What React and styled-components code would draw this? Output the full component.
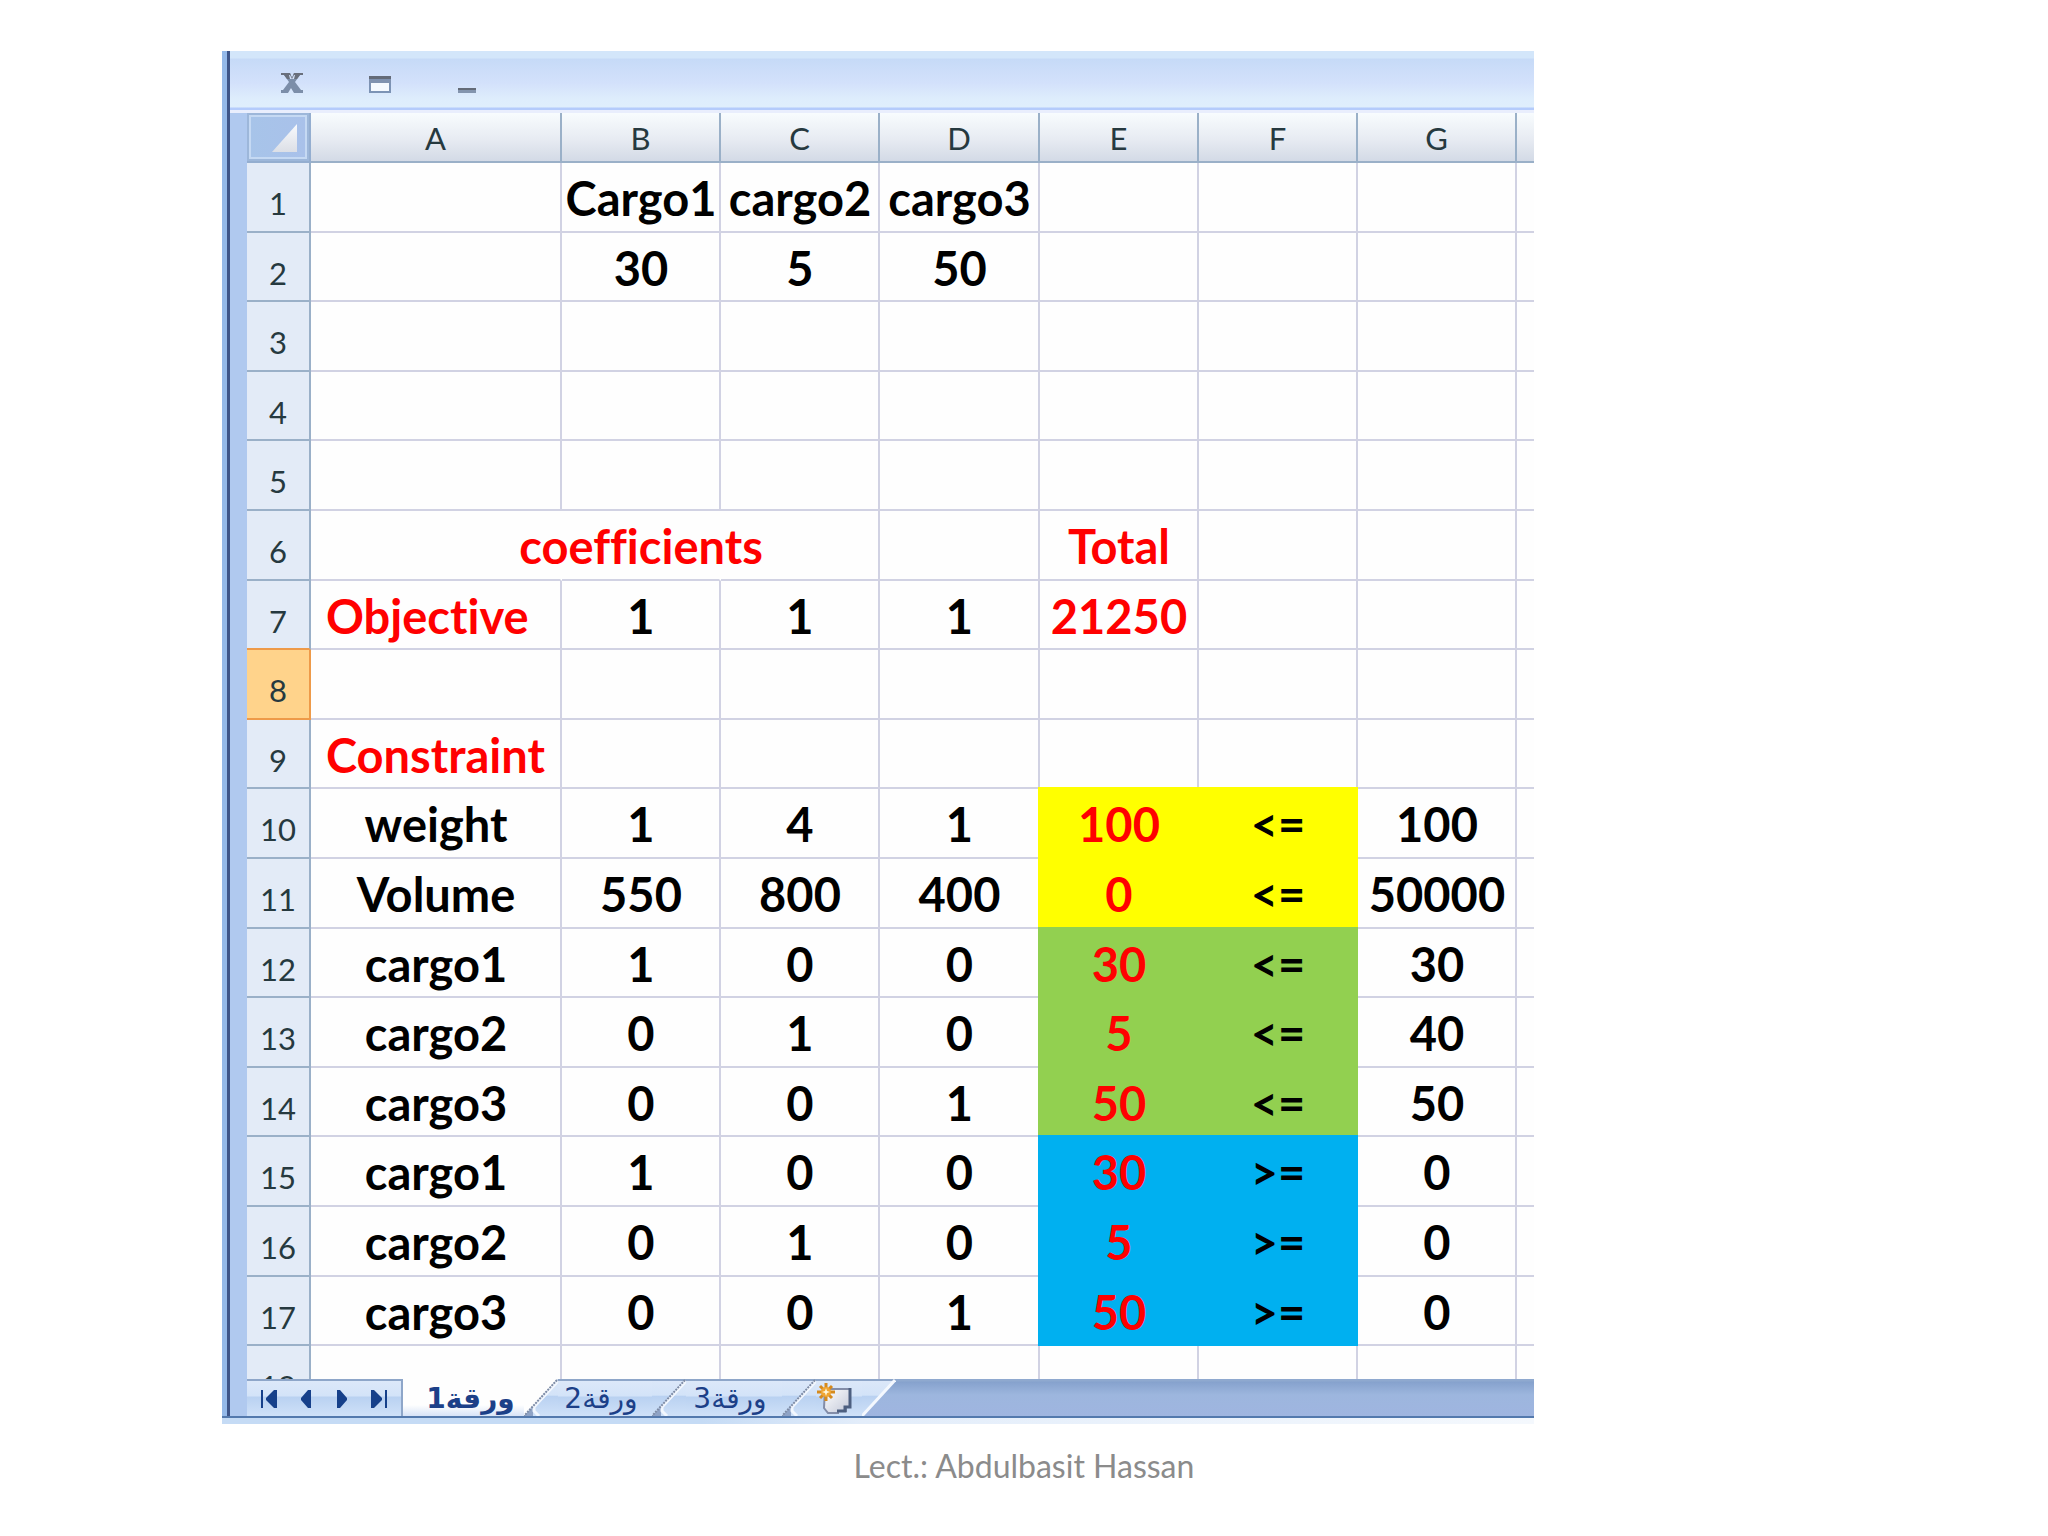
import React from "react";
import styled, { createGlobalStyle, css } from "styled-components";

const GRID = "#d1d2e3";
const HEAD_LINE = "#9ab0c8";
const ORANGE = "#ee9a49";
const YELLOW = "#ffff00";
const GREEN = "#92d050";
const BLUE = "#00b0f0";

const GlobalStyle = createGlobalStyle`
  * { box-sizing: border-box; }
  body { margin: 0; background: #ffffff; font-family: Lato, "Noto Sans", sans-serif; font-variant-ligatures: none; }
  button { font: inherit; border: 0; padding: 0; background: none; cursor: pointer; }
  svg { display: block; }
`;

const Slide = styled.main`
  height: 100vh;
  display: flex;
  flex-direction: column;
  padding: 51px 514px 0 222px;
`;

const Frame = styled.section`
  flex: 1;
  min-height: 0;
  display: flex;
  flex-direction: column;
`;

const FrameBody = styled.div`
  flex: 1;
  min-height: 0;
  display: flex;
  flex-direction: column;
  border-left: 5px solid #94b9e9;
`;

const Inner = styled.div`
  flex: 1;
  min-height: 0;
  display: flex;
  flex-direction: column;
  border-left: 3px solid #3d5488;
`;

const TitleBar = styled.header`
  height: 62px;
  flex: none;
  display: flex;
  align-items: flex-start;
  gap: 64px;
  padding: 20px 0 0 50px;
  border-bottom: 3px solid #e9eefd;
  background: linear-gradient(#d3e6fa 0 7px, #c6daf7 8px, #d3e1fb 32px, #deedfc 48px, #dfeefc 56px, #b4cbfb 57px);
`;

const WindowButton = styled.button`
  width: 24px;
  height: 24px;
`;

const Workspace = styled.div`
  flex: 1;
  min-height: 0;
  display: flex;
  flex-direction: column;
  border-left: 17px solid #b0c9ef;
`;

const Pane = styled.div`
  flex: 1;
  min-height: 0;
  overflow: hidden;
`;

const Table = styled.table`
  width: 100%;
  table-layout: fixed;
  border-collapse: separate;
  border-spacing: 0;
`;

const Col = styled.col`
  width: ${(p) => (p.$w ? p.$w + "px" : "auto")};
`;

const headText = css`
  font-size: 31px;
  line-height: 40px;
  font-weight: 400;
  color: #26393f;
`;

const ColumnHead = styled.th`
  ${headText}
  height: 50px;
  padding: 2px 0 0;
  border-right: 2px solid ${HEAD_LINE};
  border-bottom: 2px solid ${HEAD_LINE};
  background: linear-gradient(#f8fcfe, #e7ebf2 55%, #d3dae6);
  &:last-child { border-right: 0; }
`;

const Corner = styled.td`
  height: 50px;
  padding: 0;
  border-right: 2px solid #94aed0;
  border-bottom: 2px solid #94aed0;
`;

const CornerButton = styled.button`
  display: flex;
  width: 100%;
  height: 48px;
  align-items: flex-end;
  justify-content: flex-end;
  padding: 0 10px 7px 0;
  border: 2px solid #9db7da;
  box-shadow: inset 0 0 0 2px #c5d9f3;
  background: linear-gradient(90deg, #a7c4e9, #a9c1ea);
`;

const Row = styled.tr`
  height: 70px;
  &:nth-child(5n + 2), &:nth-child(5n + 4) { height: 69px; }
`;

const RowHead = styled.th`
  ${headText}
  padding: 12px 0 0;
  border-right: 2px solid ${(p) => (p.$active ? ORANGE : HEAD_LINE)};
  border-bottom: 2px solid ${(p) => (p.$active || p.$beforeActive ? ORANGE : HEAD_LINE)};
  background: ${(p) => (p.$active ? "#ffd38b" : "#e3ebf7")};
`;

const Cell = styled.td`
  padding: 2px 14px 0 15px;
  font-size: 47px;
  line-height: 54px;
  font-weight: 700;
  color: ${(p) => (p.$red ? "#ff0000" : "#000000")};
  background: #fefefe;
  border-right: 2px solid ${(p) => (p.$open ? "#fefefe" : GRID)};
  border-bottom: 2px solid ${GRID};
  ${(p) => p.$fill && css`
    background: ${p.$fill};
    border-color: ${p.$fill};
    box-shadow: -2px 0 ${p.$fill}, 0 -2px ${p.$fill}, -2px -2px ${p.$fill};
  `}
  &:last-child { border-right: 0; }
`;

const CellText = styled.div`
  display: flex;
  justify-content: ${(p) => (p.$left ? "flex-start" : "center")};
  white-space: nowrap;
`;

const SheetBar = styled.footer`
  height: 37px;
  flex: none;
  display: flex;
  overflow: hidden;
  background: linear-gradient(#8fa9cf 0 2px, #86a2cd 3px, #9db6de 16px, #9fb5e0);
`;

const barFill = css`
  border-top: 2px solid #8ea6c9;
  background: linear-gradient(#dce8f9, #d3e3f8 15px, #b9d1f1 16px, #cfe1f8);
`;

const Navigator = styled.nav`
  ${barFill}
  width: 156px;
  display: flex;
  align-items: center;
  justify-content: space-between;
  padding: 0 14px;
  border-right: 2px solid #8ea6c9;
`;

const NavButton = styled.button`
  width: 18px;
  height: 18px;
`;

const Tabs = styled.div`
  display: flex;
`;

const Tab = styled.button`
  ${barFill}
  width: ${(p) => p.$w}px;
  display: flex;
  align-items: center;
  justify-content: center;
  padding-right: 8px;
  white-space: nowrap;
  font-family: "DejaVu Sans", sans-serif;
  font-size: 28px;
  line-height: 32px;
  font-weight: 400;
  color: #1c4088;
  ${(p) => p.$active && css`
    padding: 0 0 0 14px;
    font-weight: 700;
    border-top-color: #fefefe;
    background: linear-gradient(#fefefe 24px, #d7e3f7);
  `}
`;

const BottomEdge = styled.div`
  height: 8px;
  flex: none;
  border-top: 2px solid #5379ad;
  background: linear-gradient(90deg, #c5dbf5 0 480px, #e3edfa 640px, #f4f8fd);
`;

const Credit = styled.p`
  margin: 0 -514px 0 -222px;
  height: 112px;
  padding-top: 22px;
  text-align: center;
  font-size: 32px;
  line-height: 40px;
  color: #8b8b8b;
`;

const CloseGlyph = () => (
  <svg width="24" height="24" viewBox="0 0 24 24">
    <path d="M1 2h9l2 5 2-5h9v2h-3l-5 7 6 8h2v3h-9l-3-5-3 5H1v-3h2l6-8-5-7H1z" fill="#7c8ea9" />
    <path d="M1 2h9l2 5 2-5h9v2h-3l-3 4h-10l-3-4H1z" fill="#696f7c" />
    <path d="M9 4h1l2 4 2-4h1l-1 4h-4z" fill="#d0def6" />
  </svg>
);

const RestoreGlyph = () => (
  <svg width="24" height="24" viewBox="0 0 24 24">
    <rect x="2" y="6" width="20" height="15" fill="#f4f9ff" stroke="#7c93b5" strokeWidth="2" />
    <path d="M1 5h22v3H1z" fill="#646b78" />
    <path d="M1 8h22v4H1z" fill="#7f92b0" />
  </svg>
);

const MinimiseGlyph = () => (
  <svg width="24" height="24" viewBox="0 0 24 24">
    <path d="M2 17h18v2H2z" fill="#646b78" />
    <path d="M2 19h18v3H2z" fill="#8394ae" />
  </svg>
);

const CornerGlyph = () => (
  <svg width="25" height="28" viewBox="0 0 25 28">
    <defs>
      <linearGradient id="corner" x1="0" y1="0" x2="0" y2="1">
        <stop offset="0" stopColor="#f8fafd" />
        <stop offset="1" stopColor="#dcdfe6" />
      </linearGradient>
    </defs>
    <path d="M25 0V28H0z" fill="url(#corner)" />
  </svg>
);

const navShapes = {
  "First sheet": "M0 0h2v18H0zM16 0v18h-3L5 10V8l8-8z",
  "Previous sheet": "M14 0v18h-3L4 10V8l7-8z",
  "Next sheet": "M4 0v18h3l7-8V8L7 0z",
  "Last sheet": "M16 0h2v18h-2zM2 0v18h3l8-8V8L5 0z",
};

const Slope = ({ from, to }) => {
  const id = `slope-${from}-${to}`;
  return (
    <svg width="34" height="37" viewBox="0 0 34 37" aria-hidden="true">
      <defs>
        <linearGradient id={id} x1="0" y1="0" x2="0" y2="1">
          <stop offset="0" stopColor="#dce8f9" />
          <stop offset="0.44" stopColor="#d3e3f8" />
          <stop offset="0.46" stopColor="#b9d1f1" />
          <stop offset="1" stopColor="#cfe1f8" />
        </linearGradient>
      </defs>
      <path d="M0 0H34L0 37z" fill={from === "active" ? "#fefefe" : `url(#${id})`} />
      {to === "tab" && <path d="M34 0V37H0z" fill={`url(#${id})`} />}
      {to === "tab" && <path d="M0 37L9 28V37z" fill="#8fa3c6" />}
      {from !== "active" && <path d="M0 0H34V2H0z" fill="#8ea6c9" />}
      {to === "tab" && <path d="M34 2L10 28V32L15 37" fill="none" stroke="#f2f7fe" strokeWidth="3" />}
      <path
        d="M33 1L0 37"
        fill="none"
        stroke={to === "tab" ? "#7e8ca6" : "#f4f8fe"}
        strokeWidth={to === "tab" ? 2 : 3}
        strokeDasharray={to === "tab" ? "2 1" : "none"}
      />
    </svg>
  );
};

const InsertGlyph = () => (
  <svg width="36" height="32" viewBox="0 0 36 32">
    <defs>
      <linearGradient id="paper" x1="0" y1="0" x2="1" y2="1">
        <stop offset="0" stopColor="#ffffff" />
        <stop offset="1" stopColor="#c2c7d8" />
      </linearGradient>
    </defs>
    <path d="M8 6H33V24H29V28H21V30H11L7 25z" fill="url(#paper)" stroke="#838da8" strokeWidth="2" />
    <path d="M33 5V24H28V28H20" fill="none" stroke="#4d5f80" strokeWidth="3" />
    <g stroke="#d58a1d" strokeWidth="3">
      <path d="M9 0V18M0 9H18M3 3L15 15M15 3L3 15" />
    </g>
    <circle cx="9" cy="9" r="5" fill="#f0a532" />
    <path d="M9 5L10 8L13 9L10 10L9 13L8 10L5 9L8 8z" fill="#fff8dc" />
  </svg>
);

const columns = ["A", "B", "C", "D", "E", "F", "G", ""];
const widths = [64, 251, 159, 159, 160, 159, 159, 159, 0];

const rows = [
  { cells: ["", "Cargo1", "cargo2", "cargo3"] },
  { cells: ["", "30", "5", "50"] },
  { cells: [] },
  { cells: [] },
  { cells: [] },
  { cells: ["", "coefficients", "", "", "Total"], red: [1, 4], open: [0, 1] },
  { cells: ["Objective", "1", "1", "1", "21250"], red: [0, 4], left: true },
  { cells: [], active: true },
  { cells: ["Constraint"], red: [0], left: true },
  { cells: ["weight", "1", "4", "1", "100", "<=", "100"], red: [4], fill: YELLOW },
  { cells: ["Volume", "550", "800", "400", "0", "<=", "50000"], red: [4], fill: YELLOW },
  { cells: ["cargo1", "1", "0", "0", "30", "<=", "30"], red: [4], fill: GREEN },
  { cells: ["cargo2", "0", "1", "0", "5", "<=", "40"], red: [4], fill: GREEN },
  { cells: ["cargo3", "0", "0", "1", "50", "<=", "50"], red: [4], fill: GREEN },
  { cells: ["cargo1", "1", "0", "0", "30", ">=", "0"], red: [4], fill: BLUE },
  { cells: ["cargo2", "0", "1", "0", "5", ">=", "0"], red: [4], fill: BLUE },
  { cells: ["cargo3", "0", "0", "1", "50", ">=", "0"], red: [4], fill: BLUE },
  { cells: [] },
];

const isFilled = (c) => c === 4 || c === 5;
const has = (list, c) => Boolean(list && list.includes(c));

function SheetRow({ row, next, number }) {
  return (
    <Row>
      <RowHead scope="row" $active={row.active} $beforeActive={next && next.active}>
        {number}
      </RowHead>
      {columns.map((_, c) => (
        <Cell
          key={c}
          $red={has(row.red, c)}
          $open={has(row.open, c)}
          $fill={isFilled(c) ? row.fill : undefined}
        >
          <CellText $left={row.left && c === 0}>{row.cells[c]}</CellText>
        </Cell>
      ))}
    </Row>
  );
}

export default function App() {
  return (
    <>
      <GlobalStyle />
      <Slide>
        <Frame>
          <FrameBody>
            <Inner>
              <TitleBar>
                <WindowButton aria-label="Close"><CloseGlyph /></WindowButton>
                <WindowButton aria-label="Restore"><RestoreGlyph /></WindowButton>
                <WindowButton aria-label="Minimise"><MinimiseGlyph /></WindowButton>
              </TitleBar>
              <Workspace>
                <Pane>
                  <Table>
                    <colgroup>
                      {widths.map((w, i) => <Col key={i} $w={w} />)}
                    </colgroup>
                    <thead>
                      <tr>
                        <Corner>
                          <CornerButton aria-label="Select all"><CornerGlyph /></CornerButton>
                        </Corner>
                        {columns.map((name, i) => (
                          <ColumnHead key={i} scope="col">{name}</ColumnHead>
                        ))}
                      </tr>
                    </thead>
                    <tbody>
                      {rows.map((row, i) => (
                        <SheetRow key={i} row={row} next={rows[i + 1]} number={i + 1} />
                      ))}
                    </tbody>
                  </Table>
                </Pane>
                <SheetBar>
                  <Navigator>
                    {Object.entries(navShapes).map(([label, d]) => (
                      <NavButton key={label} aria-label={label}>
                        <svg width="18" height="18" viewBox="0 0 18 18">
                          <path d={d} fill="#16408a" />
                        </svg>
                      </NavButton>
                    ))}
                  </Navigator>
                  <Tabs>
                    <Tab $w={121} $active dir="rtl">ورقة1</Tab>
                    <Slope from="active" to="tab" />
                    <Tab $w={94} dir="rtl">ورقة2</Tab>
                    <Slope from="second" to="tab" />
                    <Tab $w={96} dir="rtl">ورقة3</Tab>
                    <Slope from="third" to="tab" />
                    <Tab $w={46} aria-label="Insert sheet"><InsertGlyph /></Tab>
                    <Slope from="insert" to="end" />
                  </Tabs>
                </SheetBar>
              </Workspace>
            </Inner>
          </FrameBody>
          <BottomEdge />
        </Frame>
        <Credit>Lect.: Abdulbasit Hassan</Credit>
      </Slide>
    </>
  );
}
